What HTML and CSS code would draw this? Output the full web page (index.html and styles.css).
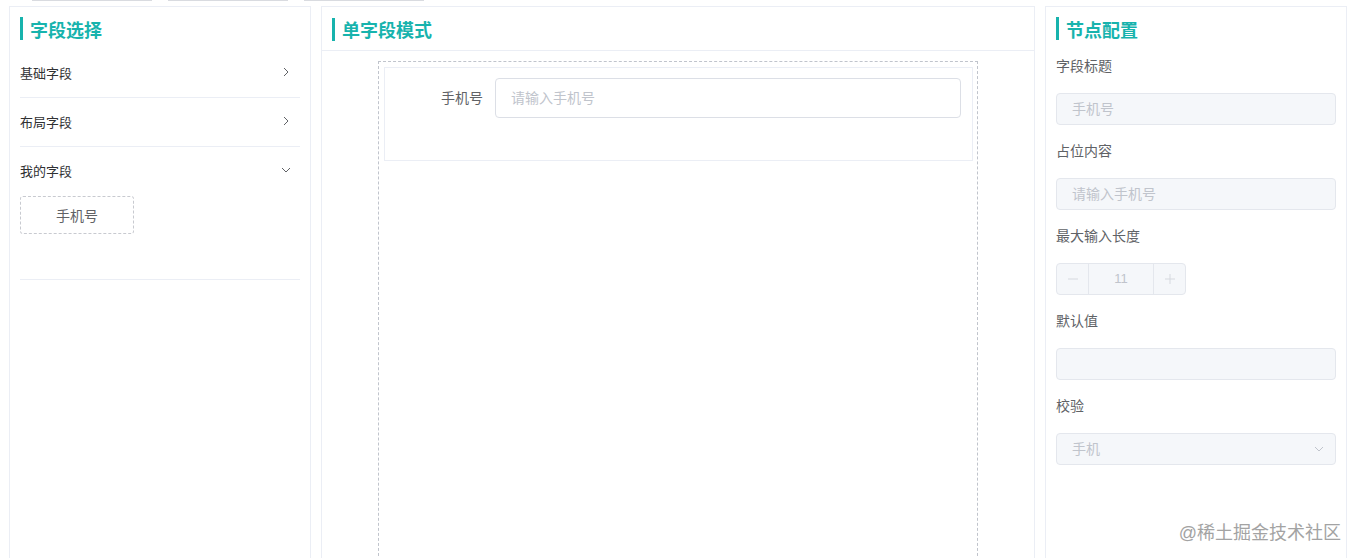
FILE: index.html
```html
<!DOCTYPE html>
<html lang="zh-CN">
<head>
    <meta charset="UTF-8">
    <meta name="viewport" content="width=device-width, initial-scale=1.0">
    <title>表单设计</title>
    <link rel="stylesheet" href="styles.css">
</head>
<body>
    <!-- 顶部标签残影 -->
    <div class="top-strip">
        <span></span><span></span><span></span>
    </div>

    <div class="workspace">
        <!-- 字段选择 -->
        <div class="panel panel-side">
            <div class="panel-title"><span class="bar"></span>字段选择</div>
            <div class="collapse">
                <div class="collapse-item">
                    <div class="collapse-head">
                        <span>基础字段</span>
                        <svg class="arrow" viewBox="0 0 12 12"><path d="M4 2l4 4-4 4"/></svg>
                    </div>
                </div>
                <div class="collapse-item">
                    <div class="collapse-head">
                        <span>布局字段</span>
                        <svg class="arrow" viewBox="0 0 12 12"><path d="M4 2l4 4-4 4"/></svg>
                    </div>
                </div>
                <div class="collapse-item">
                    <div class="collapse-head">
                        <span>我的字段</span>
                        <svg class="arrow" viewBox="0 0 12 12"><path d="M2 4l4 4 4-4"/></svg>
                    </div>
                    <div class="collapse-body">
                        <div class="field-chip">手机号</div>
                    </div>
                </div>
            </div>
        </div>

        <!-- 单字段模式 -->
        <div class="panel panel-main">
            <div class="panel-title main-title"><span class="bar"></span>单字段模式</div>
            <div class="canvas">
                <div class="drop-zone">
                    <div class="form-row">
                        <label class="row-label">手机号</label>
                        <div class="row-input">请输入手机号</div>
                    </div>
                </div>
            </div>
        </div>

        <!-- 节点配置 -->
        <div class="panel panel-side">
            <div class="panel-title"><span class="bar"></span>节点配置</div>
            <div class="config">
                <div class="config-item">
                    <div class="config-label">字段标题</div>
                    <div class="disabled-input">手机号</div>
                </div>
                <div class="config-item">
                    <div class="config-label">占位内容</div>
                    <div class="disabled-input">请输入手机号</div>
                </div>
                <div class="config-item">
                    <div class="config-label">最大输入长度</div>
                    <div class="number-input">
                        <span class="num-btn">
                            <svg viewBox="0 0 12 12"><path d="M1 6h10"/></svg>
                        </span>
                        <span class="num-value">11</span>
                        <span class="num-btn">
                            <svg viewBox="0 0 12 12"><path d="M1 6h10M6 1v10"/></svg>
                        </span>
                    </div>
                </div>
                <div class="config-item">
                    <div class="config-label">默认值</div>
                    <div class="disabled-input"></div>
                </div>
                <div class="config-item">
                    <div class="config-label">校验</div>
                    <div class="disabled-input select">
                        <span>手机</span>
                        <svg class="arrow" viewBox="0 0 12 12"><path d="M2 4l4 4 4-4"/></svg>
                    </div>
                </div>
            </div>
        </div>
    </div>

    <div class="watermark">@稀土掘金技术社区</div>
</body>
</html>
```

FILE: styles.css
```css
* {
    margin: 0;
    padding: 0;
    box-sizing: border-box;
}

body {
    font-family: "Liberation Sans", "Noto Sans CJK SC", sans-serif;
    background: #fff;
    color: #303133;
    height: 558px;
    overflow: hidden;
    position: relative;
}

.top-strip {
    display: flex;
    gap: 16px;
    padding-left: 32px;
    height: 6px;
}

.top-strip span {
    width: 120px;
    height: 1px;
    background: #d9dbe0;
}

.workspace {
    display: flex;
    gap: 10px;
    padding-left: 9px;
}

.panel {
    border: 1px solid #ebeef5;
    background: #fff;
    height: 553px;
    overflow: hidden;
}

.panel-side {
    width: 302px;
    padding: 0 10px;
}

.panel-main {
    width: 714px;
}

.panel-title {
    display: flex;
    align-items: center;
    padding-top: 10px;
    height: 42px;
    padding-bottom: 9px;
    font-size: 18px;
    font-weight: bold;
    color: #17b3ad;
}

.panel-title .bar {
    width: 3px;
    height: 23px;
    background: #17b3ad;
    margin-right: 7px;
}

.main-title {
    padding-left: 10px;
    height: 44px;
    border-bottom: 1px solid #ebeef5;
}

/* 左侧折叠 */
.collapse-item {
    border-bottom: 1px solid #ebeef5;
}

.collapse-head {
    height: 48px;
    display: flex;
    align-items: center;
    justify-content: space-between;
    font-size: 13px;
    color: #303133;
    padding-right: 8px;
    padding-bottom: 2px;
}

.arrow {
    width: 12px;
    height: 12px;
    fill: none;
    stroke: #606266;
    stroke-width: 1;
}

.collapse-body {
    padding-bottom: 45px;
    padding-top: 1px;
}

.field-chip {
    width: 114px;
    height: 38px;
    border: 1px dashed #c8cad0;
    border-radius: 3px;
    display: flex;
    align-items: center;
    justify-content: center;
    font-size: 14px;
    color: #606266;
}

/* 中间画布 */
.canvas {
    padding-top: 10px;
    display: flex;
    justify-content: center;
}

.drop-zone {
    width: 600px;
    height: 500px;
    border: 1px dashed #c0c4cc;
    padding: 5px 4px 0 5px;
}

.form-row {
    height: 94px;
    border: 1px solid #ebeef5;
    display: flex;
    align-items: flex-start;
    padding: 10px 11px 0 0;
}

.row-label {
    width: 110px;
    height: 40px;
    line-height: 40px;
    text-align: right;
    padding-right: 12px;
    font-size: 14px;
    color: #606266;
}

.row-input {
    flex: 1;
    height: 40px;
    border: 1px solid #dcdfe6;
    border-radius: 4px;
    padding-left: 15px;
    line-height: 38px;
    font-size: 14px;
    color: #c0c4cc;
}

/* 右侧配置 */
.config-item {
    margin-bottom: 16px;
}

.config-label {
    height: 20px;
    line-height: 20px;
    margin-bottom: 17px;
    font-size: 14px;
    color: #606266;
}

.config-item:first-child .config-label {
    margin-top: 7px;
}

.disabled-input {
    height: 32px;
    background: #f5f7fa;
    border: 1px solid #e4e7ed;
    border-radius: 4px;
    padding: 0 15px;
    line-height: 30px;
    font-size: 14px;
    color: #c0c4cc;
}

.select {
    display: flex;
    justify-content: space-between;
    align-items: center;
    padding-right: 10px;
}

.select .arrow {
    stroke: #c0c4cc;
}

.number-input {
    width: 130px;
    height: 32px;
    display: flex;
    background: #f5f7fa;
    border: 1px solid #e4e7ed;
    border-radius: 4px;
}

.num-btn {
    width: 32px;
    display: flex;
    align-items: center;
    justify-content: center;
}

.num-btn:first-child {
    border-right: 1px solid #e4e7ed;
}

.num-btn:last-child {
    border-left: 1px solid #e4e7ed;
}

.num-btn svg {
    width: 12px;
    height: 12px;
    fill: none;
    stroke: #d6d9df;
    stroke-width: 1;
}

.num-value {
    flex: 1;
    text-align: center;
    line-height: 30px;
    font-size: 13px;
    color: #c0c4cc;
}

.watermark {
    position: absolute;
    right: 17px;
    bottom: 14px;
    font-size: 18px;
    color: #a3a3a3;
    text-shadow: 0 0 2px #fff;
}
```
